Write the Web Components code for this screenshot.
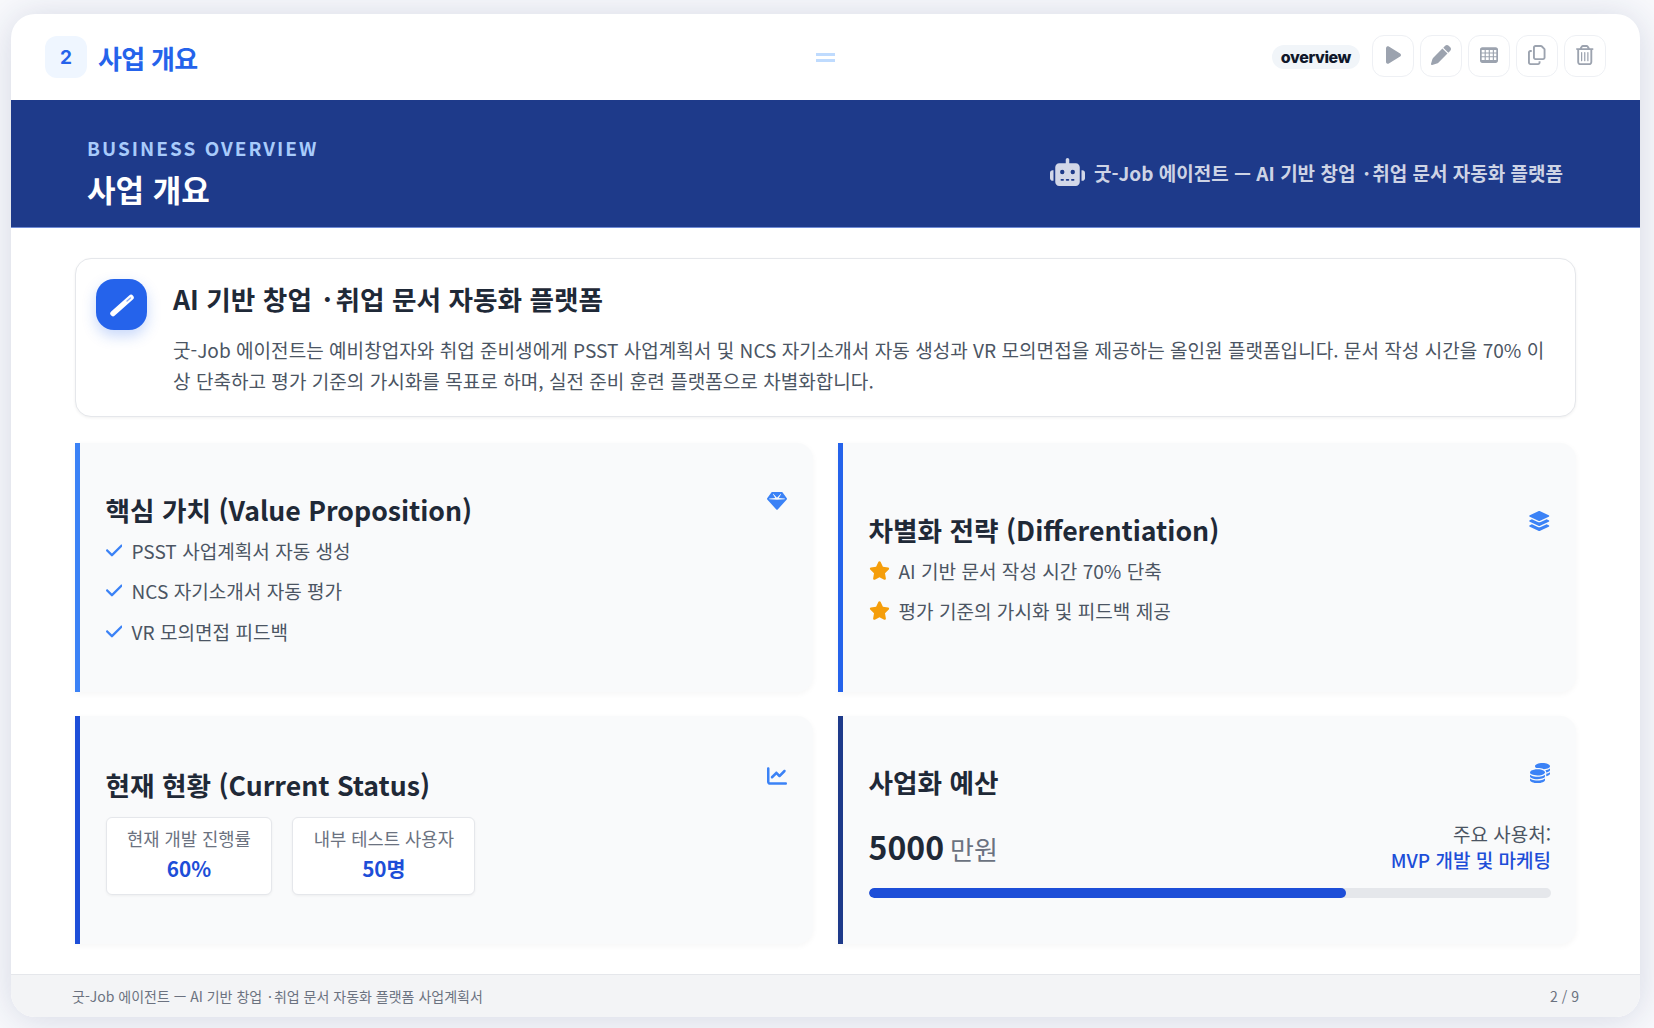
<!DOCTYPE html>
<html lang="ko">
<head>
<meta charset="utf-8">
<title>사업 개요</title>
<style>
  html, body { height: 100%; }
  body {
    margin: 0;
    padding: 14px 14px 11px 11px;
    box-sizing: border-box;
    height: 1028px;
    overflow: hidden;
    background: #f8f9fc;
    font-family: "Noto Sans CJK KR", "Noto Sans", sans-serif;
  }
</style>
</head>
<body>
<slide-frame>
  <slide-toolbar slot="toolbar" number="2" heading="사업 개요" tag="overview"></slide-toolbar>
  <slide-banner slot="banner" eyebrow="BUSINESS OVERVIEW" heading="사업 개요">굿-Job 에이전트 — AI 기반 창업<mid-dot>·</mid-dot>취업 문서 자동화 플랫폼</slide-banner>

  <summary-card>
    <span slot="heading">AI 기반 창업<mid-dot>·</mid-dot>취업 문서 자동화 플랫폼</span>
    굿-Job 에이전트는 예비창업자와 취업 준비생에게 PSST 사업계획서 및 NCS 자기소개서 자동 생성과 VR 모의면접을 제공하는 올인원 플랫폼입니다. 문서 작성 시간을 70% 이상 단축하고 평가 기준의 가시화를 목표로 하며, 실전 준비 훈련 플랫폼으로 차별화합니다.
  </summary-card>

  <card-grid>
    <info-card heading="핵심 가치 (Value Proposition)" icon="gem" accent="#3b82f6" style="padding-top: 6px">
      <list-item icon="check">PSST 사업계획서 자동 생성</list-item>
      <list-item icon="check">NCS 자기소개서 자동 평가</list-item>
      <list-item icon="check">VR 모의면접 피드백</list-item>
    </info-card>
    <info-card heading="차별화 전략 (Differentiation)" icon="layers" accent="#2563eb" style="padding-top: 6px">
      <list-item icon="star">AI 기반 문서 작성 시간 70% 단축</list-item>
      <list-item icon="star">평가 기준의 가시화 및 피드백 제공</list-item>
    </info-card>
    <info-card heading="현재 현황 (Current Status)" icon="chart" accent="#1d4ed8">
      <stat-row>
        <stat-box label="현재 개발 진행률" value="60%"></stat-box>
        <stat-box label="내부 테스트 사용자" value="50명"></stat-box>
      </stat-row>
    </info-card>
    <info-card heading="사업화 예산" icon="coins" accent="#1e3a8a">
      <budget-panel amount="5000" unit="만원" label="주요 사용처:" usage="MVP 개발 및 마케팅" percent="70"></budget-panel>
    </info-card>
  </card-grid>

  <slide-footer slot="footer" page="2 / 9">굿-Job 에이전트 — AI 기반 창업<mid-dot>·</mid-dot>취업 문서 자동화 플랫폼 사업계획서</slide-footer>
</slide-frame>

<script>
const icons = {
  play: ['0 0 384 512', 'M73 39c-14.8-9.1-33.4-9.4-48.5-.9S0 62.6 0 80V432c0 17.4 9.4 33.4 24.5 41.9s33.7 8.1 48.5-.9L361 297c14.3-8.7 23-24.2 23-41s-8.7-32.2-23-41L73 39z'],
  pen: ['0 0 512 512', 'M362.7 19.3L314.3 67.7 444.3 197.7l48.4-48.4c25-25 25-65.5 0-90.5L453.3 19.3c-25-25-65.5-25-90.5 0zm-71 71L58.6 323.5c-10.4 10.4-18 23.3-22.2 37.4L1 481.2C-1.5 489.7 .8 498.8 7 505s15.3 8.5 23.7 6.1l120.3-35.4c14.1-4.2 27-11.8 37.4-22.2L421.7 220.3 291.7 90.3z'],
  table: ['0 0 512 512', 'M64 32C28.7 32 0 60.7 0 96V416c0 35.3 28.7 64 64 64H448c35.3 0 64-28.7 64-64V96c0-35.3-28.7-64-64-64H64zM48 112h84v72H48zm116 0h84v72H164zm116 0h84v72H280zm116 0h68v72H396zM48 216h84v72H48zm116 0h84v72H164zm116 0h84v72H280zm116 0h68v72H396zM48 320h84v80H48zm116 0h84v80H164zm116 0h84v80H280zm116 0h68v80H396z'],
  copy: ['0 0 448 512', 'M384 336H192c-8.8 0-16-7.2-16-16V64c0-8.8 7.2-16 16-16l140.1 0L400 115.9V320c0 8.8-7.2 16-16 16zM192 384H384c35.3 0 64-28.7 64-64V115.9c0-12.7-5.1-24.9-14.1-33.9L366.1 14.1c-9-9-21.2-14.1-33.9-14.1H192c-35.3 0-64 28.7-64 64V320c0 35.3 28.7 64 64 64zM64 128c-35.3 0-64 28.7-64 64V448c0 35.3 28.7 64 64 64H256c35.3 0 64-28.7 64-64V416H272v32c0 8.8-7.2 16-16 16H64c-8.8 0-16-7.2-16-16V192c0-8.8 7.2-16 16-16H96V128H64z'],
  trash: ['0 0 448 512', 'M170.5 51.6L151.5 80h145l-19-28.4c-1.5-2.2-4-3.6-6.7-3.6H177.1c-2.7 0-5.2 1.3-6.7 3.6zm147-26.6L354.2 80H368h48 8c13.3 0 24 10.7 24 24s-10.7 24-24 24h-8V432c0 44.2-35.8 80-80 80H112c-44.2 0-80-35.8-80-80V128H24c-13.3 0-24-10.7-24-24S10.7 80 24 80h8H80 93.8l36.7-55.1C140.9 9.4 158.4 0 177.1 0h93.7c18.7 0 36.2 9.4 46.6 24.9zM80 128V432c0 17.7 14.3 32 32 32H336c17.7 0 32-14.3 32-32V128H80zm80 64V400c0 8.8-7.2 16-16 16s-16-7.2-16-16V192c0-8.8 7.2-16 16-16s16 7.2 16 16zm80 0V400c0 8.8-7.2 16-16 16s-16-7.2-16-16V192c0-8.8 7.2-16 16-16s16 7.2 16 16zm80 0V400c0 8.8-7.2 16-16 16s-16-7.2-16-16V192c0-8.8 7.2-16 16-16s16 7.2 16 16z'],
  gem: ['0 0 512 512', 'M116.7 33.8c4.5-6.1 11.7-9.8 19.3-9.8H376c7.6 0 14.8 3.6 19.3 9.8l112 152c6.8 9.2 6.1 21.9-1.5 30.4l-232 256c-4.5 5-11 7.9-17.8 7.9s-13.2-2.9-17.8-7.9l-232-256c-7.7-8.5-8.3-21.2-1.5-30.4l112-152zm38.5 39.8c-3.3 2.5-4.2 7-2.1 10.5l57.4 95.6L63.3 192c-4.1 .3-7.3 3.8-7.3 8s3.2 7.6 7.3 8l192 16c.4 0 .9 0 1.3 0l192-16c4.1-.3 7.3-3.8 7.3-8s-3.2-7.6-7.3-8L301.5 179.8l57.4-95.6c2.1-3.5 1.2-8.1-2.1-10.5s-7.9-2-10.7 1L256 172.2 165.9 74.6c-2.8-3-7.4-3.4-10.7-1z'],
  layers: ['0 0 576 512', 'M264.5 5.2c14.9-6.9 32.1-6.9 47 0l218.6 101c8.5 3.9 13.9 12.4 13.9 21.8s-5.4 17.9-13.9 21.8l-218.6 101c-14.9 6.9-32.1 6.9-47 0L45.9 149.8C37.4 145.8 32 137.3 32 128s5.4-17.9 13.9-21.8L264.5 5.2zM476.9 209.6l53.2 24.6c8.5 3.9 13.9 12.4 13.9 21.8s-5.4 17.9-13.9 21.8l-218.6 101c-14.9 6.9-32.1 6.9-47 0L45.9 277.8C37.4 273.8 32 265.3 32 256s5.4-17.9 13.9-21.8l53.2-24.6 152 70.2c23.4 10.8 50.4 10.8 73.8 0l152-70.2zm-152 198.2l152-70.2 53.2 24.6c8.5 3.9 13.9 12.4 13.9 21.8s-5.4 17.9-13.9 21.8l-218.6 101c-14.9 6.9-32.1 6.9-47 0L45.9 405.8C37.4 401.8 32 393.3 32 384s5.4-17.9 13.9-21.8l53.2-24.6 152 70.2c23.4 10.8 50.4 10.8 73.8 0z'],
  chart: ['0 0 512 512', 'M64 64c0-17.7-14.3-32-32-32S0 46.3 0 64V400c0 44.2 35.8 80 80 80H480c17.7 0 32-14.3 32-32s-14.3-32-32-32H80c-8.8 0-16-7.2-16-16V64zm406.6 86.6c12.5-12.5 12.5-32.8 0-45.3s-32.8-12.5-45.3 0L320 210.7l-57.4-57.4c-12.5-12.5-32.8-12.5-45.3 0l-112 112c-12.5 12.5-12.5 32.8 0 45.3s32.8 12.5 45.3 0L240 221.3l57.4 57.4c12.5 12.5 32.8 12.5 45.3 0l128-128z'],
  coins: ['0 0 512 512', 'M512 80c0 18-14.3 34.6-38.4 48c-29.1 16.1-72.5 27.5-122.3 30.9c-3.7-1.8-7.4-3.5-11.3-5C300.6 137.4 248.2 128 192 128c-8.3 0-16.4 .2-24.5 .6l-1.1-.6C142.3 114.6 128 98 128 80c0-44.2 86-80 192-80S512 35.8 512 80zM160.7 161.1c10.2-.7 20.7-1.1 31.3-1.1c62.2 0 117.4 12.3 152.5 31.4C369.3 204.9 384 221.7 384 240c0 4-.7 7.9-2.1 11.7c-4.6 13.2-17 25.3-35 35.5c-.1 .1-.3 .1-.4 .2c-.3 .2-.6 .3-.9 .5c-35 19.4-90.8 32-153.6 32c-59.6 0-112.9-11.3-148.2-29.1c-1.9-.9-3.7-1.9-5.5-2.9C14.3 274.6 0 258 0 240c0-34.8 53.4-64.5 128-75.4c10.5-1.5 21.4-2.7 32.7-3.5zM416 240c0-21.9-10.6-39.9-24.1-53.4c28.3-4.4 54.2-11.4 76.2-20.5c16.3-6.8 31.5-15.2 43.9-25.5V176c0 19.3-16.5 37.1-43.8 50.9c-14.6 7.4-32.4 13.7-52.4 18.5c.1-1.8 .2-3.5 .2-5.3zm-32 96c0 18-14.3 34.6-38.4 48c-1.8 1-3.6 1.9-5.5 2.9C304.9 404.7 251.6 416 192 416c-62.8 0-118.6-12.6-153.6-32C14.3 370.6 0 354 0 336V300.6c12.5 10.3 27.6 18.7 43.9 25.5C83.4 342.6 135.8 352 192 352s108.6-9.4 148.1-25.9c7.8-3.2 15.3-6.9 22.4-10.9c6.1-3.4 11.8-7.2 17.2-11.2c1.5-1.1 2.9-2.3 4.3-3.4V304v5.7V336zm32 0V304 278.1c19-4.2 36.5-9.5 52.1-16c16.3-6.8 31.5-15.2 43.9-25.5V272c0 10.5-5 21-14.9 30.9c-16.3 16.3-45 29.7-81 38.4c.1-1.7 .2-3.5 .2-5.3zM192 448c56.2 0 108.6-9.4 148.1-25.9c16.3-6.8 31.5-15.2 43.9-25.5V432c0 44.2-86 80-192 80S0 476.2 0 432V396.6c12.5 10.3 27.6 18.7 43.9 25.5C83.4 438.6 135.8 448 192 448z'],
  check: ['0 0 448 512', 'M438.6 105.4c12.5 12.5 12.5 32.8 0 45.3l-256 256c-12.5 12.5-32.8 12.5-45.3 0l-128-128c-12.5-12.5-12.5-32.8 0-45.3s32.8-12.5 45.3 0L160 338.7 393.4 105.4c12.5-12.5 32.8-12.5 45.3 0z'],
  star: ['0 0 576 512', 'M316.9 18C311.6 7 300.4 0 288.1 0s-23.4 7-28.8 18L195 150.3 51.4 171.5c-12 1.8-22 10.2-25.7 21.7s-.7 24.2 7.9 32.7L137.8 329 113.2 474.7c-2 12 3 24.2 12.9 31.3s23 8 33.8 2.3l128.3-68.5 128.3 68.5c10.8 5.7 23.9 4.9 33.8-2.3s14.9-19.3 12.9-31.3L438.5 329 542.7 225.9c8.6-8.5 11.7-21.2 7.9-32.7s-13.7-19.9-25.7-21.7L381.2 150.3 316.9 18z'],
  robot: ['0 0 640 512', 'M320 0c17.7 0 32 14.3 32 32V96H472c39.8 0 72 32.2 72 72V440c0 39.8-32.2 72-72 72H168c-39.8 0-72-32.2-72-72V168c0-39.8 32.2-72 72-72H288V32c0-17.7 14.3-32 32-32zM208 384c-8.8 0-16 7.2-16 16s7.2 16 16 16h32c8.8 0 16-7.2 16-16s-7.2-16-16-16H208zm96 0c-8.8 0-16 7.2-16 16s7.2 16 16 16h32c8.8 0 16-7.2 16-16s-7.2-16-16-16H304zm96 0c-8.8 0-16 7.2-16 16s7.2 16 16 16h32c8.8 0 16-7.2 16-16s-7.2-16-16-16H400zM264 256a40 40 0 1 0 -80 0 40 40 0 1 0 80 0zm152 40a40 40 0 1 0 0-80 40 40 0 1 0 0 80zM48 224H64V416H48c-26.5 0-48-21.5-48-48V272c0-26.5 21.5-48 48-48zm544 0c26.5 0 48 21.5 48 48v96c0 26.5-21.5 48-48 48H576V224h16z']
};

class IconGlyph extends HTMLElement {
  connectedCallback() {
    let [box, d] = icons[this.getAttribute('name')];
    let shadow = this.attachShadow({mode: 'open'});
    shadow.innerHTML = `
      <style>
        :host { display: inline-flex; align-items: center; justify-content: center; flex: none; }
        svg { height: 100%; display: block; fill: currentColor; fill-rule: evenodd; }
      </style>
      <svg viewBox="${box}"><path d="${d}"/></svg>`;
  }
}

// the middle dot sits wider in the reference than this font sets it
class MidDot extends HTMLElement {
  constructor() {
    super();
    this.attachShadow({mode: 'open'}).innerHTML = `
      <style>:host { display: inline; margin: 0 0.14em; }</style>
      <slot></slot>`;
  }
}

class SlideFrame extends HTMLElement {
  constructor() {
    super();
    this.attachShadow({mode: 'open'}).innerHTML = `
      <style>
        :host {
          display: flex;
          flex-direction: column;
          height: 100%;
          background: white;
          border-radius: 24px;
          overflow: hidden;
          box-shadow: 0 2px 36px rgb(30 41 100 / 0.16);
        }
        main {
          flex: 1;
          display: flex;
          flex-direction: column;
          gap: 26px;
          padding: 30px 64px;
          min-height: 0;
        }
      </style>
      <slot name="toolbar"></slot>
      <slot name="banner"></slot>
      <main><slot></slot></main>
      <slot name="footer"></slot>`;
  }
}

class SlideToolbar extends HTMLElement {
  connectedCallback() {
    let buttons = ['play', 'pen', 'table', 'copy', 'trash'].map((name, i) =>
      `<button><icon-glyph name="${name}" style="height:${[20, 20, 18, 20, 20][i]}px"></icon-glyph></button>`).join('');
    this.attachShadow({mode: 'open'}).innerHTML = `
      <style>
        :host {
          display: grid;
          grid-template-columns: 1fr auto 1fr;
          align-items: center;
          height: 86px;
          padding: 0 34px;
          box-sizing: border-box;
        }
        .left { display: flex; align-items: center; gap: 11px; }
        .number {
          width: 42px;
          height: 42px;
          border-radius: 12px;
          background: #eff6ff;
          color: #2563eb;
          display: flex;
          align-items: center;
          justify-content: center;
          font: 700 19px Inter, sans-serif;
        }
        h2 { margin: 0; font-size: 26px; font-weight: 700; color: #2563eb; letter-spacing: -0.7px; }
        .handle { width: 19px; height: 9px; border-top: 3px solid #bfdbfe; border-bottom: 3px solid #bfdbfe; box-sizing: border-box; }
        .right { display: flex; align-items: center; justify-content: flex-end; gap: 6px; margin-bottom: 2px; }
        .tag {
          background: #f1f5f9;
          color: #0f172a;
          font: 800 16px Inter, sans-serif;
          letter-spacing: -0.4px;
          border-radius: 12px;
          padding: 2px 9px;
          margin: 2px 6px 0 0;
        }
        button {
          width: 42px;
          height: 42px;
          padding: 0 0 2px;
          border: 1px solid #eef0f4;
          border-radius: 12px;
          background: white;
          color: #9ca3af;
          display: flex;
          align-items: center;
          justify-content: center;
        }
      </style>
      <div class="left"><span class="number">${this.getAttribute('number')}</span><h2>${this.getAttribute('heading')}</h2></div>
      <div class="handle"></div>
      <div class="right"><span class="tag">${this.getAttribute('tag')}</span>${buttons}</div>`;
  }
}

class SlideBanner extends HTMLElement {
  connectedCallback() {
    this.attachShadow({mode: 'open'}).innerHTML = `
      <style>
        :host {
          display: flex;
          align-items: center;
          justify-content: space-between;
          height: 128px;
          padding: 17px 77px 0 76px;
          box-sizing: border-box;
          background: #1e3a8a;
          border-bottom: 1px solid #6f8bd6;
        }
        .eyebrow { font-size: 19px; font-weight: 700; letter-spacing: 2px; color: #a8cbfb; line-height: 30px; margin-bottom: 3px; }
        h1 { margin: 0; font-size: 31px; font-weight: 700; color: white; line-height: 46px; }
        .note { display: flex; align-items: center; gap: 9px; color: rgb(255 255 255 / 0.8); font-size: 19px; font-weight: 700; }
        icon-glyph { height: 28px; }
      </style>
      <div>
        <div class="eyebrow">${this.getAttribute('eyebrow')}</div>
        <h1>${this.getAttribute('heading')}</h1>
      </div>
      <div class="note"><icon-glyph name="robot"></icon-glyph><span><slot></slot></span></div>`;
  }
}

class SummaryCard extends HTMLElement {
  connectedCallback() {
    this.attachShadow({mode: 'open'}).innerHTML = `
      <style>
        :host {
          display: flex;
          gap: 26px;
          height: 159px;
          padding: 20px 21px 20px 20px;
          box-sizing: border-box;
          border: 1px solid #e5e7eb;
          border-radius: 16px;
          background: white;
          box-shadow: 0 1px 3px rgb(0 0 0 / 0.06);
        }
        .badge {
          flex: none;
          width: 51px;
          height: 51px;
          border-radius: 18px;
          background: #2563eb;
          box-shadow: 0 6px 14px rgb(37 99 235 / 0.25);
          display: flex;
          align-items: center;
          justify-content: center;
        }
        h3 { margin: 0 0 16px; font-size: 26.67px; font-weight: 700; color: #1f2937; line-height: 40px; }
        p { margin: 0; font-size: 19.07px; line-height: 30.6px; color: #4b5563; }
      </style>
      <div class="badge">
        <svg width="28" height="28" viewBox="0 0 28 28"><path d="M5 22.5 L23 6.5" stroke="white" stroke-width="5.5" stroke-linecap="round"/><path d="M19 10 L22.5 7" stroke="#2563eb" stroke-opacity=".55" stroke-width="1.3" stroke-linecap="round"/></svg>
      </div>
      <div><h3><slot name="heading"></slot></h3><p><slot></slot></p></div>`;
  }
}

class CardGrid extends HTMLElement {
  constructor() {
    super();
    this.attachShadow({mode: 'open'}).innerHTML = `
      <style>
        :host { display: grid; grid-template-columns: 1fr 1fr; grid-template-rows: 249px 228px; gap: 24px 25px; }
      </style>
      <slot></slot>`;
  }
}

class InfoCard extends HTMLElement {
  connectedCallback() {
    this.attachShadow({mode: 'open'}).innerHTML = `
      <style>
        :host {
          display: flex;
          flex-direction: column;
          justify-content: center;
          padding: 0 25px 0 25.5px;
          box-sizing: border-box;
          background: #f9fafb;
          border-left: 5px solid ${this.getAttribute('accent')};
          border-radius: 0 16px 16px 0;
          box-shadow: 0 2px 6px rgb(0 0 0 / 0.04);
        }
        header { display: flex; justify-content: space-between; align-items: flex-start; }
        h3 { margin: 0; font-size: 26.67px; font-weight: 700; color: #1f2937; line-height: 40px; }
        icon-glyph { height: 20px; color: #3b82f6; margin: 1px 1px 0 0; }
      </style>
      <header><h3>${this.getAttribute('heading')}</h3><icon-glyph name="${this.getAttribute('icon')}"></icon-glyph></header>
      <slot></slot>`;
  }
}

class ListItem extends HTMLElement {
  connectedCallback() {
    let star = this.getAttribute('icon') == 'star';
    this.attachShadow({mode: 'open'}).innerHTML = `
      <style>
        :host { display: flex; align-items: center; gap: 9px; height: 40.5px; font-size: 19.07px; color: #4b5563; }
        icon-glyph { height: 19px; width: ${star ? 21 : 17}px; color: ${star ? '#f59e0b' : '#3b82f6'}; }
      </style>
      <icon-glyph name="${this.getAttribute('icon')}"></icon-glyph><span><slot></slot></span>`;
  }
}

class StatRow extends HTMLElement {
  constructor() {
    super();
    this.attachShadow({mode: 'open'}).innerHTML = `
      <style>:host { display: flex; gap: 20px; margin-top: 12px; }</style>
      <slot></slot>`;
  }
}

class StatBox extends HTMLElement {
  connectedCallback() {
    this.attachShadow({mode: 'open'}).innerHTML = `
      <style>
        :host {
          display: block;
          height: 78px;
          padding: 5px 20.5px;
          box-sizing: border-box;
          text-align: center;
          background: white;
          border: 1px solid #e5e7eb;
          border-radius: 6px;
          box-shadow: 0 1px 3px rgb(0 0 0 / 0.05);
        }
        .label { font-size: 17.7px; line-height: 30px; color: #6b7280; }
        .value { font-size: 20.7px; line-height: 31px; font-weight: 700; color: #1d4ed8; }
      </style>
      <div class="label">${this.getAttribute('label')}</div>
      <div class="value">${this.getAttribute('value')}</div>`;
  }
}

class BudgetPanel extends HTMLElement {
  connectedCallback() {
    this.attachShadow({mode: 'open'}).innerHTML = `
      <style>
        :host { display: block; margin-top: 20px; }
        .row { display: flex; justify-content: space-between; align-items: center; }
        .amount { font-size: 32px; font-weight: 700; color: #1f2937; line-height: 48px; }
        .unit { font-size: 26px; font-weight: 400; color: #6b7280; margin-left: 6px; }
        .usage { text-align: right; font-size: 19px; line-height: 26px; color: #4b5563; margin-top: -2px; }
        .usage b { display: block; font-weight: 500; color: #1d4ed8; }
        .track { height: 10px; margin-top: 15px; border-radius: 5px; background: #e5e7eb; overflow: hidden; }
        .fill { height: 100%; width: ${this.getAttribute('percent')}%; border-radius: 5px; background: #1d4ed8; }
      </style>
      <div class="row">
        <div class="amount">${this.getAttribute('amount')}<span class="unit">${this.getAttribute('unit')}</span></div>
        <div class="usage">${this.getAttribute('label')}<b>${this.getAttribute('usage')}</b></div>
      </div>
      <div class="track"><div class="fill"></div></div>`;
  }
}

class SlideFooter extends HTMLElement {
  connectedCallback() {
    this.attachShadow({mode: 'open'}).innerHTML = `
      <style>
        :host {
          display: flex;
          align-items: center;
          justify-content: space-between;
          height: 43px;
          padding: 0 61px;
          box-sizing: border-box;
          background: #f3f4f6;
          border-top: 1px solid #e5e7eb;
          font-size: 14px;
          color: #6b7280;
        }
      </style>
      <span><slot></slot></span><span>${this.getAttribute('page')}</span>`;
  }
}

customElements.define('icon-glyph', IconGlyph);
customElements.define('mid-dot', MidDot);
customElements.define('slide-frame', SlideFrame);
customElements.define('slide-toolbar', SlideToolbar);
customElements.define('slide-banner', SlideBanner);
customElements.define('summary-card', SummaryCard);
customElements.define('card-grid', CardGrid);
customElements.define('info-card', InfoCard);
customElements.define('list-item', ListItem);
customElements.define('stat-row', StatRow);
customElements.define('stat-box', StatBox);
customElements.define('budget-panel', BudgetPanel);
customElements.define('slide-footer', SlideFooter);
</script>
</body>
</html>
